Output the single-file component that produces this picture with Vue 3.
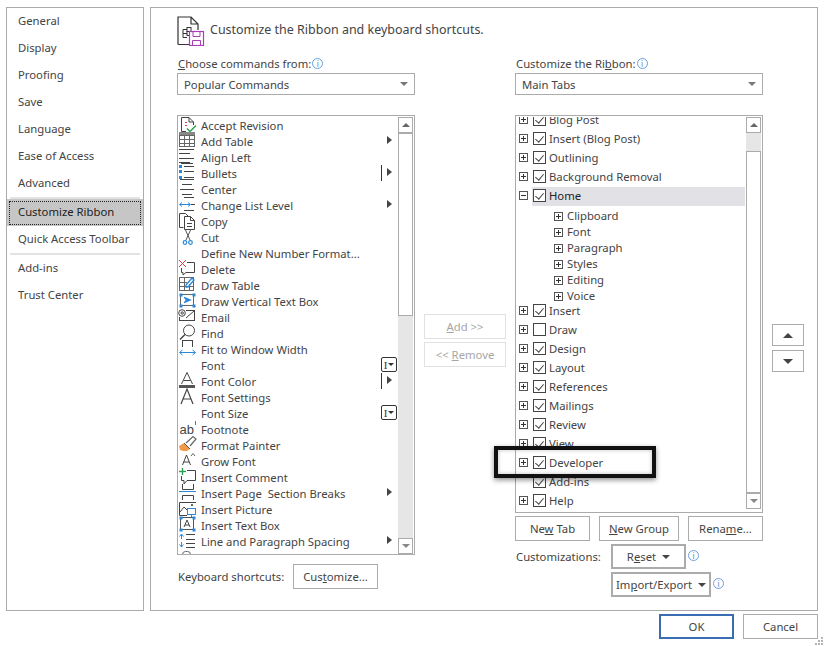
<script setup>
const S = '#444'
const B = '#2b88d8'
const line = (x1, y1, x2, y2, c = S, w = 1) => `<line x1="${x1}" y1="${y1}" x2="${x2}" y2="${y2}" stroke="${c}" stroke-width="${w}"/>`
const rect = (x, y, w, h, c = S) => `<rect x="${x}" y="${y}" width="${w}" height="${h}" fill="none" stroke="${c}"/>`
const fill = (x, y, w, h, c = B) => `<rect x="${x}" y="${y}" width="${w}" height="${h}" fill="${c}"/>`
const path = (d, c = S, w = 1) => `<path d="${d}" fill="none" stroke="${c}" stroke-width="${w}"/>`
const solid = (d, c = S) => `<path d="${d}" fill="${c}"/>`
const handles = (a, b, c, d) => [[a, b], [c, b], [a, d], [c, d]].map(([x, y]) => fill(x - 1, y - 1, 3, 3)).join('')

const icons = {
  accept: path('M3.5 16.5V2.5H11L15.5 7V10M11 2.5V7H15.5M3.5 16.5H8') + path('M9 13.5L12 16.5L18 10.5', '#2e9e4f', 1.5) + fill(7, 7, 2, 1, '#d04040') + fill(7, 10, 2, 1, '#d04040'),
  table: fill(1, 1, 16, 3, '#888') + rect(1.5, 4.5, 15, 11, '#666') + line(6.5, 4, 6.5, 16, '#666') + line(11.5, 4, 11.5, 16, '#666') + line(1, 8.5, 17, 8.5, '#666') + line(1, 12.5, 17, 12.5, '#666'),
  alignLeft: line(1, 2.5, 16, 2.5) + line(1, 6.5, 12, 6.5) + line(1, 11.5, 16, 11.5) + line(1, 15.5, 12, 15.5),
  bullets: fill(1, 2, 3, 3) + fill(1, 7, 3, 3) + fill(1, 13, 3, 3) + line(6, 3.5, 16, 3.5) + line(6, 8.5, 16, 8.5) + line(6, 14.5, 16, 14.5) + line(3, 0.5, 15, 0.5),
  center: line(2, 0.5, 16, 0.5) + line(4, 5.5, 14, 5.5) + line(2, 10.5, 16, 10.5) + line(4, 15.5, 14, 15.5),
  level: line(6, 2.5, 16, 2.5) + line(2, 9.5, 12, 9.5, B) + path('M4 7.5L1.5 9.5L4 11.5M10 7.5L12.5 9.5L10 11.5', B) + line(13, 9.5, 17, 9.5) + line(6, 15.5, 16, 15.5),
  copy: path('M5.5 16.5H1.5V2.5H7.5L10 5') + path('M6.5 18.5V5.5H12.5L16.5 9.5V18.5ZM12.5 5.5V9.5H16.5') + line(9, 12.5, 14, 12.5) + line(9, 15.5, 14, 15.5),
  cut: path('M7 2L12 13M13 2L8 13', '#555') + `<circle cx="7" cy="15.5" r="1.8" fill="none" stroke="${B}" stroke-width="1.2"/><circle cx="12.5" cy="15.5" r="1.8" fill="none" stroke="${B}" stroke-width="1.2"/>`,
  del: path('M1 1L8 8M8 1L1 8', '#e03c3c') + path('M9 3.5H16.5V13.5H8L5 16V13.5H3.5V9'),
  drawTable: rect(1.5, 2.5, 14, 13, '#666') + line(6.5, 3, 6.5, 16, '#666') + line(11.5, 9, 11.5, 16, '#666') + line(2, 7.5, 9, 7.5, '#666') + line(2, 11.5, 15, 11.5, '#666') + path('M8 10L14 3L16 5L10 12L8 12Z', B, 1.3),
  vbox: rect(2.5, 3.5, 13, 11, '#666') + handles(2.5, 3.5, 15.5, 14.5) + path('M6 6.5L12 9L6 11.5M7 9H11', B, 1.4),
  email: rect(1.5, 3.5, 15, 10) + `<rect x="0" y="1" width="8" height="9" fill="#fff"/><circle cx="4" cy="6" r="3.3" fill="none" stroke="${S}"/><circle cx="4.2" cy="6" r="1.2" fill="none" stroke="${S}"/>` + path('M8 11L16 4'),
  find: `<circle cx="11" cy="7.5" r="5.5" fill="none" stroke="${S}"/>` + line(7, 11.5, 2, 16.5, S, 1.4),
  fit: rect(4.5, 1.5, 10, 9) + `<rect x="3" y="8" width="13" height="4" fill="#fff"/>` + line(2, 13.5, 17, 13.5, B) + path('M4.5 11L1.5 13.5L4.5 16M14.5 11L17.5 13.5L14.5 16', B),
  fontColor: path('M3.5 13L9 1.5L14.5 13M5.500 9.5H12.500') + fill(1, 14, 16, 3, '#555'),
  fontSet: path('M3 17L9 2L15 17M5 12H13', S, 1.2),
  footnote: `<text x="1.500" y="15" font-size="13" fill="#444" font-family="Liberation Sans, sans-serif">ab</text>` + line(17.5, 2, 17.5, 6, '#e03c3c'),
  painter: solid('M1 11L6 8L12 14L9 16L5 16L2 15Z', '#f2994a') + path('M8 8L15 1.5L18 4L12 11', '#666', 1.2) + path('M6 8L12 14', '#555'),
  grow: path('M4.5 14L8.5 4L12.5 14M6 11H11') + path('M13 5L15 2.5L17 5', '#666'),
  comment: path('M9 3.5H17.5V13.5H9L6 17V13.5H3.5V9') + line(4.5, 1, 4.5, 8, '#2e9e4f', 1.4) + line(1, 4.5, 8, 4.5, '#2e9e4f', 1.4),
  breaks: path('M4.5 1V6.5H15.5V1') + line(1, 8.5, 18, 8.5, B) + path('M4.5 17V12.5H15.5V17'),
  picture: path('M18 3.5H1.5V16.5H9') + path('M2 13L6 8L9 11') + fill(13, 5, 2, 2, '#666') + rect(9.5, 9.5, 8, 6, B) + line(13.5, 16, 13.5, 18, B) + line(11, 18.5, 16, 18.5, B),
  textBox: rect(2.5, 2.5, 13, 12, '#555') + handles(2.5, 2.5, 15.5, 14.5) + path('M6 12L9 5L12 12M7 10H11', S),
  spacing: line(3.5, 4, 3.5, 8, B) + line(3.5, 11, 3.5, 16, B) + path('M1.5 5.5L3.5 3L5.5 5.5M1.5 13.5L3.5 16L5.5 13.5', B) + line(8, 3.5, 17, 3.5) + line(8, 8.5, 17, 8.5) + line(8, 12.5, 17, 12.5) + line(8, 16.5, 17, 16.5),
  macros: `<rect x="4.5" y="4.5" width="8" height="12" rx="3" fill="none" stroke="#666"/>`
}

const commands = [
  { label: 'Accept Revision', icon: 'accept' },
  { label: 'Add Table', icon: 'table', arrow: true },
  { label: 'Align Left', icon: 'alignLeft' },
  { label: 'Bullets', icon: 'bullets', arrow: true, bar: true },
  { label: 'Center', icon: 'center' },
  { label: 'Change List Level', icon: 'level', arrow: true },
  { label: 'Copy', icon: 'copy' },
  { label: 'Cut', icon: 'cut' },
  { label: 'Define New Number Format...' },
  { label: 'Delete', icon: 'del' },
  { label: 'Draw Table', icon: 'drawTable' },
  { label: 'Draw Vertical Text Box', icon: 'vbox' },
  { label: 'Email', icon: 'email' },
  { label: 'Find', icon: 'find' },
  { label: 'Fit to Window Width', icon: 'fit' },
  { label: 'Font', combo: true },
  { label: 'Font Color', icon: 'fontColor', arrow: true, bar: true },
  { label: 'Font Settings', icon: 'fontSet' },
  { label: 'Font Size', combo: true },
  { label: 'Footnote', icon: 'footnote' },
  { label: 'Format Painter', icon: 'painter' },
  { label: 'Grow Font', icon: 'grow' },
  { label: 'Insert Comment', icon: 'comment' },
  { label: 'Insert Page  Section Breaks', icon: 'breaks', arrow: true },
  { label: 'Insert Picture', icon: 'picture' },
  { label: 'Insert Text Box', icon: 'textBox' },
  { label: 'Line and Paragraph Spacing', icon: 'spacing', arrow: true },
  { label: 'Macros', icon: 'macros' }
]

const navTop = ['General', 'Display', 'Proofing', 'Save', 'Language', 'Ease of Access', 'Advanced']

const tabsA = ['Blog Post', 'Insert (Blog Post)', 'Outlining', 'Background Removal']
const subs = ['Clipboard', 'Font', 'Paragraph', 'Styles', 'Editing', 'Voice']
const tabsB = [
  { label: 'Insert', on: true, plus: true },
  { label: 'Draw', on: false, plus: true },
  { label: 'Design', on: true, plus: true },
  { label: 'Layout', on: true, plus: true },
  { label: 'References', on: true, plus: true },
  { label: 'Mailings', on: true, plus: true },
  { label: 'Review', on: true, plus: true },
  { label: 'View', on: true, plus: true },
  { label: 'Developer', on: true, plus: true },
  { label: 'Add-ins', on: true, plus: false },
  { label: 'Help', on: true, plus: true }
]
</script>

<template>
  <div class="app">
    <div class="top">
      <nav class="side">
        <div v-for="n in navTop" :key="n" class="nav">{{ n }}</div>
        <div class="sep"></div>
        <div class="nav sel"><span class="focus">Customize Ribbon</span></div>
        <div class="nav">Quick Access Toolbar</div>
        <div class="sep"></div>
        <div class="nav">Add-ins</div>
        <div class="nav">Trust Center</div>
      </nav>

      <main class="panel">
        <header class="head">
          <svg class="head-ic" width="28" height="30" viewBox="0 0 28 30">
            <path d="M1 28.500V1H14L21 8V14M14 1V8H21M1 28.500H12" fill="none" stroke="#333" stroke-width="1.2" />
            <path d="M6 13.500H10M6 13.500V21.500H10M6 17.500H10" fill="none" stroke="#333" />
            <rect x="10" y="11.500" width="4" height="4" fill="none" stroke="#333" />
            <rect x="10" y="15.500" width="4" height="4" fill="none" stroke="#333" />
            <rect x="12.500" y="15.500" width="14" height="14" fill="#fff" stroke="#a83fb5" stroke-width="1.2" />
            <path d="M16 15.500V20.500H23V15.500M15.500 29.500V24.500H23.500V29.500" fill="none" stroke="#a83fb5" />
          </svg>
          <span class="title">Customize the Ribbon and keyboard shortcuts.</span>
        </header>

        <div class="cols">
          <section class="col-left">
            <div class="lab"><span><u>C</u>hoose commands from:</span><i class="info">i</i></div>
            <div class="select"><span>Popular Commands</span><b class="caret"></b></div>
            <div class="listbox">
              <div class="rows">
                <div v-for="c in commands" :key="c.label" class="row">
                  <svg v-if="c.icon" class="ic" width="20" height="20" viewBox="0 0 20 20" v-html="icons[c.icon]"></svg>
                  <span v-else class="ic"></span>
                  <span class="row-t">{{ c.label }}</span>
                  <span v-if="c.bar" class="bar"></span>
                  <b v-if="c.arrow" class="sub"></b>
                  <span v-if="c.combo" class="combo"><em>I</em><b></b></span>
                </div>
              </div>
              <div class="sb">
                <div class="sb-btn"><b class="up"></b></div>
                <div class="thumb t1"></div>
                <div class="track"></div>
                <div class="sb-btn"><b class="down"></b></div>
              </div>
            </div>
            <div class="kbd">
              <span class="kbd-l">Keyboard shortcuts:</span>
              <button class="btn cust"><span>Cus<u>t</u>omize...</span></button>
            </div>
          </section>

          <section class="col-mid">
            <button class="btn off"><span><u>A</u>dd &gt;&gt;</span></button>
            <button class="btn off"><span>&lt;&lt; <u>R</u>emove</span></button>
          </section>

          <section class="col-right">
            <div class="lab lab-r"><span>Customize the Ri<u>b</u>bon:</span><i class="info">i</i></div>
            <div class="select"><span>Main Tabs</span><b class="caret"></b></div>
            <div class="treebox">
              <div class="tree">
                <div class="tree-in">
                  <div v-for="t in tabsA" :key="t" class="tab">
                    <span class="pm plus"></span><span class="cb on"></span><span>{{ t }}</span>
                  </div>
                  <div class="tab home">
                    <span class="pm"></span>
                    <span class="home-l"><span class="cb on"></span><span>Home</span></span>
                  </div>
                  <div class="subs">
                    <div v-for="s in subs" :key="s" class="subrow"><span class="pm plus"></span><span>{{ s }}</span></div>
                  </div>
                  <div v-for="t in tabsB" :key="t.label" class="tab">
                    <span class="pm" :class="t.plus ? 'plus' : 'none'"></span><span class="cb" :class="{ on: t.on }"></span><span>{{ t.label }}</span>
                  </div>
                </div>
              </div>
              <div class="sb">
                <div class="sb-btn"><b class="up"></b></div>
                <div class="track short"></div>
                <div class="thumb t2"></div>
                <div class="sb-btn"><b class="down"></b></div>
              </div>
              <div class="callout"></div>
            </div>
            <div class="actions">
              <button class="btn a1"><span>Ne<u>w</u> Tab</span></button>
              <button class="btn a2"><span><u>N</u>ew Group</span></button>
              <button class="btn a3"><span>Rena<u>m</u>e...</span></button>
            </div>
            <div class="cz">
              <span class="cz-l">Customizations:</span>
              <div class="cz-r">
                <div class="cz-line">
                  <button class="btn thick reset"><span>R<u>e</u>set</span><b class="tri"></b></button>
                  <i class="info"><span>i</span></i>
                </div>
                <div class="cz-line">
                  <button class="btn thick imp"><span>Im<u>p</u>ort/Export</span><b class="tri"></b></button>
                  <i class="info"><span>i</span></i>
                </div>
              </div>
            </div>
          </section>

          <section class="col-move">
            <button class="btn mv"><b class="mv-up"></b></button>
            <button class="btn mv"><b class="mv-down"></b></button>
          </section>
        </div>
      </main>
    </div>

    <footer class="foot">
      <button class="btn ok">OK</button>
      <button class="btn cancel">Cancel</button>
    </footer>
    <svg class="grip" width="9" height="9" viewBox="0 0 9 9">
      <g fill="#b5b5b5">
        <rect x="6" y="0" width="2" height="2" />
        <rect x="3" y="3" width="2" height="2" />
        <rect x="6" y="3" width="2" height="2" />
        <rect x="0" y="6" width="2" height="2" />
        <rect x="3" y="6" width="2" height="2" />
        <rect x="6" y="6" width="2" height="2" />
      </g>
    </svg>
  </div>
</template>

<style scoped>
.app {
  position: relative;
  width: 824px;
  height: 646px;
  box-sizing: border-box;
  padding: 7px 6px 0;
  background: #fff;
  color: #444;
  font-family: "Noto Sans", "Open Sans", sans-serif;
  font-size: 11.3px;
  line-height: 16px;
  overflow: hidden;
}
.top { display: flex; gap: 6px; height: 604px; }
.side {
  width: 138px;
  box-sizing: border-box;
  border: 1px solid #ababab;
}
.nav { height: 27px; padding: 0 0 1px 11px; box-sizing: border-box; display: flex; align-items: center; }
.sep { height: 2px; margin: 0 3px; background: #e3e3e3; }
.sel { background: #c6c6c6; color: #222; padding: 0 0 0 2px; }
.focus {
  flex: 1;
  height: 24px;
  margin-right: 2px;
  padding: 0 0 1px 8px;
  box-sizing: border-box;
  border: 1px dotted #222;
  display: flex;
  align-items: center;
}
.panel {
  width: 668px;
  box-sizing: border-box;
  border: 1px solid #ababab;
  padding-left: 26px;
}
.head { display: flex; align-items: center; height: 32px; margin-top: 7px; gap: 5px; }
.head-ic { flex: none; }
.title { font-size: 12.47px; margin-top: -2px; }
.cols { display: flex; margin-top: 9px; }
.col-left { width: 238px; flex: none; }
.col-mid { width: 100px; flex: none; display: flex; flex-direction: column; gap: 3px; padding: 258px 0 0 9px; box-sizing: border-box; }
.col-right { width: 248px; flex: none; }
.col-move { flex: none; padding: 268px 0 0 9px; display: flex; flex-direction: column; gap: 4px; }
.lab { height: 17px; display: flex; align-items: center; gap: 1px; padding: 0 0 2px 1px; box-sizing: border-box; }
.info {
  width: 11px;
  height: 11px;
  box-sizing: border-box;
  border: 1px solid #6f9fdc;
  border-radius: 50%;
  color: #4a86d0;
  font-size: 8px;
  line-height: 9px;
  font-style: normal;
  text-align: center;
  display: inline-block;
}
.select {
  height: 22px;
  box-sizing: border-box;
  border: 1px solid #ababab;
  padding: 2px 6px 0;
  display: flex;
  align-items: center;
  justify-content: space-between;
}
.caret { border: 4px solid transparent; border-top: 4px solid #777; margin-top: 2px; }
.listbox {
  margin-top: 20px;
  height: 440px;
  box-sizing: border-box;
  border: 1px solid #ababab;
  display: flex;
  padding-top: 1px;
  overflow: hidden;
}
.rows { flex: 1; min-width: 0; overflow: hidden; }
.row { height: 16px; display: flex; align-items: center; position: relative; padding-top: 2px; box-sizing: border-box; }
.ic { flex: none; width: 20px; height: 20px; margin: -4px 3px -2px 0; overflow: visible; display: block; }
.row-t { white-space: pre; }
.bar { position: absolute; left: 203px; top: 0; width: 1px; height: 16px; background: #333; }
.sub {
  position: absolute;
  left: 209px;
  top: 3px;
  border: 4px solid transparent;
  border-left: 5px solid #444;
  border-right-width: 0;
}
.combo {
  position: absolute;
  left: 203px;
  top: 0;
  width: 16px;
  height: 15px;
  box-sizing: border-box;
  border: 1px solid #333;
  border-radius: 2px;
  display: flex;
  align-items: center;
  justify-content: center;
  gap: 1px;
  background: #fff;
}
.combo em { font-style: normal; font-size: 11px; line-height: 12px; font-family: "Liberation Serif", serif; color: #333; }
.combo b { border: 3px solid transparent; border-top: 3px solid #333; margin-top: 3px; }
.sb {
  flex: none;
  width: 15px;
  margin-right: 1px;
  display: flex;
  flex-direction: column;
  background: #e6e6e6;
}
.treebox .sb { height: 392px; }
.sb-btn {
  flex: none;
  height: 16px;
  box-sizing: border-box;
  border: 1px solid #ababab;
  background: #fff;
  display: flex;
  align-items: center;
  justify-content: center;
}
.up { border: 4px solid transparent; border-bottom: 4px solid #666; border-top-width: 0; }
.down { border: 4px solid transparent; border-top: 4px solid #888; border-bottom-width: 0; }
.thumb { flex: none; box-sizing: border-box; border: 1px solid #ababab; background: #fff; }
.t1 { height: 183px; }
.t2 { flex: 1; }
.track { flex: 1; }
.track.short { flex: none; height: 18px; }
.treebox {
  position: relative;
  margin-top: 20px;
  height: 398px;
  box-sizing: border-box;
  border: 1px solid #ababab;
  display: flex;
  padding-top: 1px;
}
.tree { flex: 1; min-width: 0; overflow: hidden; }
.tree-in { margin-top: -7px; padding-left: 3px; }
.tab { height: 19px; display: flex; align-items: center; }
.pm {
  flex: none;
  position: relative;
  width: 9px;
  height: 9px;
  box-sizing: border-box;
  border: 1px solid #555;
  margin-right: 5px;
}
.pm::before { content: ""; position: absolute; left: 1px; top: 3px; width: 5px; height: 1px; background: #333; }
.pm.plus::after { content: ""; position: absolute; left: 3px; top: 1px; width: 1px; height: 5px; background: #333; }
.pm.none { visibility: hidden; }
.cb {
  flex: none;
  position: relative;
  width: 13px;
  height: 13px;
  box-sizing: border-box;
  border: 1px solid #444;
  margin-right: 3px;
  background: #fff;
}
.cb.on::after {
  content: "";
  position: absolute;
  left: 3px;
  top: 1px;
  width: 4px;
  height: 7px;
  border: solid #444;
  border-width: 0 1px 1px 0;
  transform: rotate(40deg);
}
.home { margin-top: 1px; height: 19px; padding-bottom: 2px; box-sizing: border-box; position: relative; color: #222; }
.home-l { display: flex; align-items: center; }
.home::before {
  content: "";
  position: absolute;
  left: 13px;
  right: 1px;
  top: 0;
  bottom: 0;
  background: #e1e1e6;
}
.home .pm, .home-l { position: relative; }
.subs { padding-left: 35px; margin-top: 2px; margin-bottom: -3px; }
.subrow { height: 16px; display: flex; align-items: center; }
.subrow .pm { margin-right: 4px; }
.callout {
  position: absolute;
  left: -22px;
  top: 330px;
  width: 162px;
  height: 32px;
  box-sizing: border-box;
  border: 4px solid #111;
  box-shadow: 0 2px 5px rgba(0, 0, 0, 0.45), inset 0 0 4px rgba(0, 0, 0, 0.25);
  pointer-events: none;
}
.kbd { display: flex; align-items: center; margin-top: 9px; padding-left: 1px; }
.kbd-l { width: 115px; flex: none; }
.btn {
  font: inherit;
  color: #444;
  background: #fff;
  border: 1px solid #ababab;
  padding: 0;
  box-sizing: border-box;
  display: flex;
  align-items: center;
  justify-content: center;
}
.cust { width: 85px; height: 25px; }
.off { width: 82px; height: 25px; border-color: #e1e1e1; color: #a6a6a6; }
.actions { display: flex; justify-content: space-between; margin-top: 3px; }
.a1 { width: 75px; height: 25px; }
.a2 { width: 80px; height: 25px; }
.a3 { width: 75px; height: 25px; }
.cz { display: flex; margin-top: 3px; padding-left: 1px; }
.cz-l { width: 95px; margin-top: 5px; }
.cz-r { display: flex; flex-direction: column; gap: 3px; }
.cz-line { display: flex; align-items: center; gap: 1px; }
.cz-line .info { margin-left: 1px; margin-top: -2px; }
.thick { border: 2px solid #ababab; gap: 6px; height: 25px; }
.reset { width: 75px; }
.imp { width: 100px; }
.tri { border: 4px solid transparent; border-top: 4px solid #444; border-bottom-width: 0; }
.mv { width: 32px; height: 22px; }
.mv-up { border: 5px solid transparent; border-bottom: 5px solid #444; border-top-width: 0; }
.mv-down { border: 5px solid transparent; border-top: 5px solid #444; border-bottom-width: 0; }
.foot { display: flex; justify-content: flex-end; gap: 9px; padding: 3px 0 0; }
.ok { width: 75px; height: 25px; border: 2px solid #3b6db5; }
.cancel { width: 75px; height: 25px; }
.grip { position: absolute; right: 0; bottom: 0; }
</style>
